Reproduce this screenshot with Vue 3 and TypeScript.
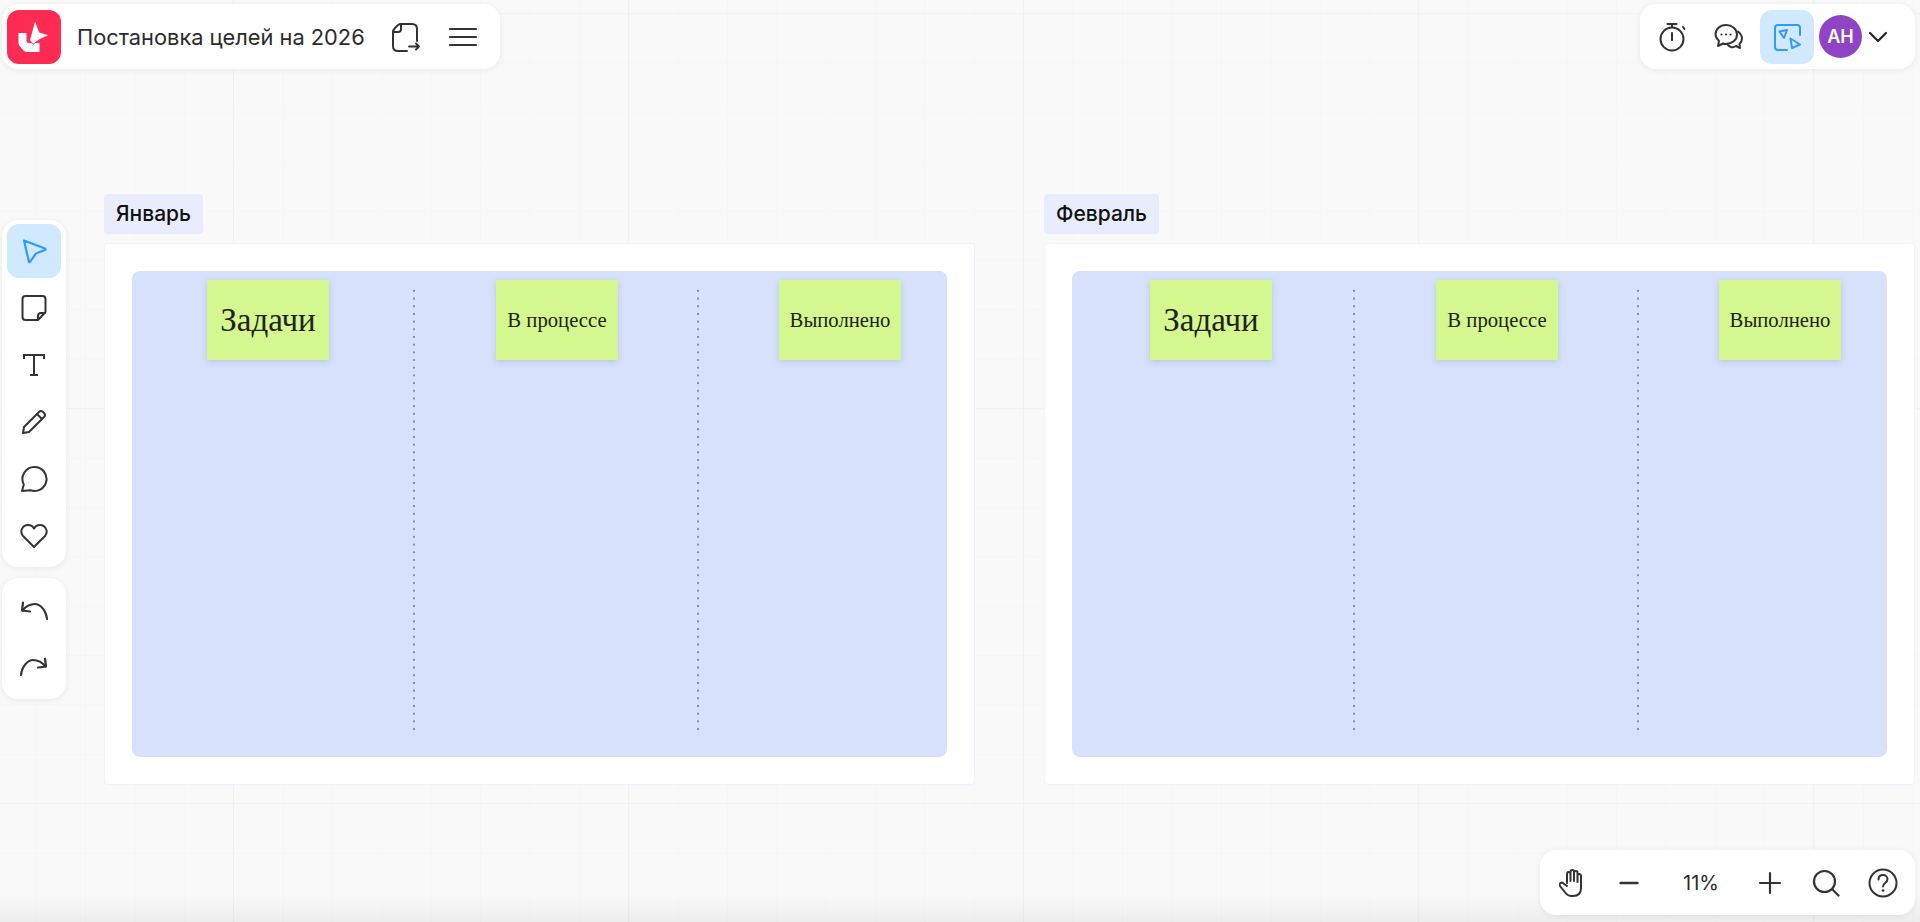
<script setup lang="ts">
interface Lane {
  title: string
  width: number
  offset: number
  big?: boolean
}

interface Month {
  name: string
  lanes: Lane[]
}

const months: Month[] = [
  {
    name: 'Январь',
    lanes: [
      { title: 'Задачи', width: 283, offset: 75, big: true },
      { title: 'В процессе', width: 284, offset: 81 },
      { title: 'Выполнено', width: 248, offset: 80 },
    ],
  },
  {
    name: 'Февраль',
    lanes: [
      { title: 'Задачи', width: 283, offset: 78, big: true },
      { title: 'В процессе', width: 284, offset: 81 },
      { title: 'Выполнено', width: 248, offset: 80 },
    ],
  },
]
</script>

<template>
  <div class="canvas">
    <main class="boards">
      <section v-for="month in months" :key="month.name" class="month">
        <div class="month-label">{{ month.name }}</div>
        <div class="frame">
          <div class="table">
            <div
              v-for="lane in month.lanes"
              :key="lane.title"
              class="lane"
              :style="{ width: lane.width + 'px', paddingLeft: lane.offset + 'px' }"
            >
              <div class="sticky" :class="{ big: lane.big }">{{ lane.title }}</div>
            </div>
          </div>
        </div>
      </section>
    </main>

    <header class="panel top-left">
      <div class="logo">
        <svg width="54" height="54" viewBox="0 0 54 54" fill="#fff">
          <path d="M11.500 23h8v8q0 2 2 2h11v9H20q-2 0-3.500-1.500l-3.500-4Q11.500 35 11.500 33z" />
          <path d="M28 11.500l4.300 11 8.700 2.800-8.700 4-6 4.400-3.300-3.500z" stroke="#ff2b52" stroke-width="1.500" paint-order="stroke" />
        </svg>
      </div>
      <h1 class="title">Постановка целей на 2026</h1>
      <button class="icon-btn share" type="button">
        <svg width="30" height="32" viewBox="0 0 30 32" fill="none" stroke="#333" stroke-width="2" stroke-linecap="round" stroke-linejoin="round">
          <path d="M11 3h11q5 0 5 5v12" />
          <path d="M17 30H8q-5 0-5-5V11q0-2 2-4l3-3q1.500-1 3-1" />
          <path d="M11 3v5q0 3-3 3H3" />
          <path d="M19 25.500h10M26 22.500l3 3-3 3" stroke-width="1.800" />
        </svg>
      </button>
      <button class="icon-btn menu" type="button">
        <svg width="28" height="20" viewBox="0 0 28 20" fill="none" stroke="#333" stroke-width="2.200" stroke-linecap="round">
          <path d="M1 2h26M1 10h26M1 18h26" />
        </svg>
      </button>
    </header>

    <div class="panel top-right">
      <button class="icon-btn square" type="button">
        <svg width="28" height="30" viewBox="0 0 28 30" fill="none" stroke="#333" stroke-width="2" stroke-linecap="round">
          <circle cx="13" cy="17" r="11.500" />
          <path d="M8.500 2h9M13 2v3M13 11v7M24 5l1.500 2" />
        </svg>
      </button>
      <button class="icon-btn square" type="button">
        <svg width="30" height="28" viewBox="0 0 30 28" fill="none" stroke="#333" stroke-width="2" stroke-linecap="round" stroke-linejoin="round">
          <path d="M12 2c6 0 11 4 11 9.500S18 21 12 21c-1 0-2 0-3-.5L4 23l1-5c-2-2-3.500-4-3.500-6.500C1.500 6 6 2 12 2z" />
          <path d="M24 8.500c2.500 2 4 4 4 7 0 2.500-1 4-2.500 5.500l.5 4-4-2c-1.500 1-3 1.500-5 1-1.500-.5-3-1.500-4-3" />
          <path d="M7.500 11.500h.1M12 11.500h.1M16.500 11.500h.1" stroke-width="2.200" />
        </svg>
      </button>
      <button class="icon-btn square active" type="button">
        <svg width="28" height="28" viewBox="0 0 28 28" fill="none" stroke="#2e9bff" stroke-width="2" stroke-linecap="round" stroke-linejoin="round">
          <path d="M27 12V5q0-3-3-3H5Q2 2 2 5v19q0 3 3 3h9" />
          <path d="M6.500 8.500l7.500-1.500-3 8z" />
          <path d="M17.500 15.500l9.500 6-8 3.500z" />
        </svg>
      </button>
      <div class="avatar">АН</div>
      <svg class="chevron" width="20" height="12" viewBox="0 0 20 12" fill="none" stroke="#222" stroke-width="2.200" stroke-linecap="round" stroke-linejoin="round">
        <path d="M2 2l8 8 8-8" />
      </svg>
    </div>

    <aside class="tools">
      <div class="panel tool-group">
        <button class="icon-btn square active" type="button">
          <svg width="26" height="26" viewBox="0 0 26 26" fill="none" stroke="#2e9bff" stroke-width="2.200" stroke-linejoin="round">
            <path d="M3 2.500l21 8q1 1 0 1.500l-8 3q-1 .3-1.500 1L9 24q-.5.800-1 0z" />
          </svg>
        </button>
        <button class="icon-btn square" type="button">
          <svg width="26" height="26" viewBox="0 0 26 26" fill="none" stroke="#333" stroke-width="2" stroke-linejoin="round">
            <path d="M17 25H4.500q-3 0-3-3V4q0-3 3-3h17q3 0 3 3v13z" />
            <path d="M17 25v-4q0-3 3-3h4.500" />
          </svg>
        </button>
        <button class="icon-btn square" type="button">
          <svg width="24" height="24" viewBox="0 0 24 24" fill="none" stroke="#333" stroke-width="2">
            <path d="M2 6V2h20v4M12 2v20M8 22h8" />
          </svg>
        </button>
        <button class="icon-btn square" type="button">
          <svg width="26" height="26" viewBox="0 0 26 26" fill="none" stroke="#333" stroke-width="2" stroke-linejoin="round">
            <path d="M2 24l1-6L18 3q2-2 4 0l1 1q2 2 0 4L8 23z" />
            <path d="M16 5l5 5" />
          </svg>
        </button>
        <button class="icon-btn square" type="button">
          <svg width="28" height="28" viewBox="0 0 28 28" fill="none" stroke="#333" stroke-width="2" stroke-linejoin="round">
            <path d="M14.500 2a12 12 0 1 1-4 23.300L2 26l1.800-6.500A12 12 0 0 1 14.500 2z" />
          </svg>
        </button>
        <button class="icon-btn square" type="button">
          <svg width="28" height="26" viewBox="0 0 28 26" fill="none" stroke="#333" stroke-width="2" stroke-linejoin="round">
            <path d="M14 24L3 13C-1 8 3 2 8 2c3 0 5 1.500 6 3.500C15 3.500 17 2 20 2c5 0 9 6 5 11z" />
          </svg>
        </button>
      </div>
      <div class="panel tool-group history">
        <button class="icon-btn square" type="button">
          <svg width="30" height="20" viewBox="0 0 30 20" fill="none" stroke="#333" stroke-width="2.200" stroke-linecap="round" stroke-linejoin="round">
            <path d="M28 18C27 9 21 3 16 3 11 3 7 5 3.500 9.500" />
            <path d="M4 1.500l-1 8 8 1" />
          </svg>
        </button>
        <button class="icon-btn square" type="button">
          <svg width="30" height="20" viewBox="0 0 30 20" fill="none" stroke="#333" stroke-width="2.200" stroke-linecap="round" stroke-linejoin="round">
            <path d="M2 18C3 9 9 3 14 3c5 0 9 2 12.500 6.500" />
            <path d="M26 1.500l1 8-8 1" />
          </svg>
        </button>
      </div>
    </aside>

    <footer class="panel zoom-bar">
      <button class="icon-btn zoom-icon" type="button">
        <svg width="26" height="28" viewBox="0 0 26 28" fill="none" stroke="#333" stroke-width="2" stroke-linecap="round" stroke-linejoin="round">
          <path d="M8 14V5q0-2 1.700-2t1.800 2v7M11.500 12V3q0-2 1.800-2t1.700 2v9M15 12V4q0-2 1.800-2t1.700 2v9M18.500 13V7q0-2 1.700-2t1.800 2v12q0 8-8 8h-2c-3 0-5-2-7-5l-4-5q-1-2 .5-3t3 .5L8 17" />
        </svg>
      </button>
      <button class="icon-btn zoom-minus" type="button">
        <svg width="20" height="4" viewBox="0 0 20 4" fill="none" stroke="#333" stroke-width="2.400" stroke-linecap="round">
          <path d="M1.500 2h17" />
        </svg>
      </button>
      <span class="zoom-value">11%</span>
      <button class="icon-btn zoom-plus" type="button">
        <svg width="24" height="24" viewBox="0 0 24 24" fill="none" stroke="#333" stroke-width="2.200" stroke-linecap="round">
          <path d="M2 12h20M12 2v20" />
        </svg>
      </button>
      <button class="icon-btn zoom-search" type="button">
        <svg width="28" height="28" viewBox="0 0 28 28" fill="none" stroke="#333" stroke-width="2.200" stroke-linecap="round">
          <circle cx="12.500" cy="12.500" r="10.500" />
          <path d="M20.500 20.500l6 6" />
        </svg>
      </button>
      <button class="icon-btn zoom-help" type="button">
        <svg width="30" height="30" viewBox="0 0 30 30" fill="none" stroke="#333" stroke-width="2" stroke-linecap="round">
          <circle cx="15" cy="15" r="13.500" />
          <path d="M10.500 11.500c0-3 2-4.500 4.500-4.500s4.500 1.700 4.500 4.200c0 3.800-4.500 3.800-4.500 7.300" />
          <path d="M15 22.500h.1" stroke-width="2.600" />
        </svg>
      </button>
    </footer>
  </div>
</template>

<style scoped>
.canvas {
  position: relative;
  width: 1920px;
  height: 922px;
  overflow: hidden;
  font-family: Inter, "Noto Sans", sans-serif;
  color: #2b2b2b;
  background-color: #f9f9f9;
  background-image:
    linear-gradient(to bottom, rgba(0, 0, 0, 0) 895px, rgba(0, 0, 0, 0.05) 922px),
    linear-gradient(to right, #f1f1f1 1px, transparent 1px),
    linear-gradient(to bottom, #f3f3f3 1px, transparent 1px),
    linear-gradient(to right, #f6f6f6 1px, transparent 1px),
    linear-gradient(to bottom, #f6f6f6 1px, transparent 1px);
  background-size: 100% 100%, 395px 395px, 395px 395px, 49.4px 49.4px, 49.4px 49.4px;
  background-position: 0 0, 233px 0, 0 13px, 35.5px 0, 0 13px;
}

.boards {
  display: flex;
  gap: 69px;
  padding: 194px 0 0 104px;
}

.month {
  width: 871px;
}

.month-label {
  display: inline-block;
  box-sizing: border-box;
  height: 40px;
  padding: 0 12px;
  border-radius: 4px;
  background: #e8ecfd;
  color: #111;
  font-size: 21px;
  font-weight: 500;
  line-height: 40px;
}

.frame {
  box-sizing: border-box;
  height: 542px;
  margin-top: 9px;
  padding: 27px;
  border: 1px solid #f1f2fb;
  border-radius: 4px;
  background: #fff;
}

.table {
  display: flex;
  height: 100%;
  padding-top: 9px;
  box-sizing: border-box;
  border-radius: 8px;
  background: #d7e1fb;
}

.lane {
  position: relative;
  box-sizing: border-box;
  height: 452px;
}

.lane:not(:last-child)::after {
  content: "";
  position: absolute;
  top: 7px;
  right: 0;
  width: 2px;
  height: 445px;
  background-image: radial-gradient(circle at center, #8b8fa6 0.9px, transparent 1.1px);
  background-size: 2px 7.700px;
}

.sticky {
  display: flex;
  align-items: center;
  justify-content: center;
  width: 122px;
  height: 80px;
  background: #d5f78f;
  box-shadow: 0 2px 6px rgba(70, 80, 120, 0.18);
  color: #222;
  font-family: "Liberation Serif", serif;
  font-size: 20.700px;
}

.sticky.big {
  font-size: 33px;
}

.panel {
  position: absolute;
  box-sizing: border-box;
  border-radius: 16px;
  background: #fff;
  box-shadow: 0 1px 6px rgba(0, 0, 0, 0.07);
}

.top-left {
  top: 4px;
  left: 2px;
  display: flex;
  align-items: center;
  width: 498px;
  height: 65px;
  padding-left: 5px;
}

.logo {
  display: flex;
  width: 54px;
  height: 54px;
  border-radius: 12px;
  background: #ff2b52;
}

.title {
  margin: 0 0 0 16px;
  font-size: 21.800px;
  font-weight: 400;
  white-space: nowrap;
}

.icon-btn {
  display: flex;
  align-items: center;
  justify-content: center;
  padding: 0;
  border: 0;
  background: transparent;
}

.share {
  margin-left: 25px;
}

.menu {
  margin-left: 29px;
}

.top-right {
  top: 4px;
  left: 1640px;
  display: flex;
  align-items: center;
  width: 275px;
  height: 65px;
  padding-left: 5px;
}

.top-right .square {
  width: 56px;
  height: 54px;
}

.top-right .active {
  width: 54px;
  margin-left: 3px;
}

.active {
  border-radius: 12px;
  background: #d0e9ff;
}

.avatar {
  display: flex;
  align-items: center;
  justify-content: center;
  width: 43px;
  height: 43px;
  margin-left: 5px;
  border-radius: 50%;
  background: #8e44c4;
  color: #fff;
  font-size: 18px;
  font-weight: 600;
}

.chevron {
  margin-left: 6px;
}

.tools {
  position: absolute;
  top: 220px;
  left: 2px;
  display: flex;
  flex-direction: column;
  gap: 11px;
}

.tool-group {
  position: static;
  display: flex;
  flex-direction: column;
  gap: 3px;
  width: 64px;
  padding: 4px 0 4px 5px;
}

.tool-group .square {
  width: 54px;
  height: 54px;
}

.history {
  padding-top: 6px;
  padding-bottom: 5px;
  gap: 2px;
}

.zoom-bar {
  top: 850px;
  left: 1540px;
  display: flex;
  align-items: center;
  width: 375px;
  height: 65px;
  padding-left: 19px;
}

.zoom-minus {
  margin-left: 34px;
}

.zoom-value {
  width: 33px;
  margin-left: 44px;
  font-size: 20px;
  text-align: center;
}

.zoom-plus {
  margin-left: 42px;
}

.zoom-search {
  margin-left: 30px;
}

.zoom-help {
  margin-left: 28px;
}
</style>
